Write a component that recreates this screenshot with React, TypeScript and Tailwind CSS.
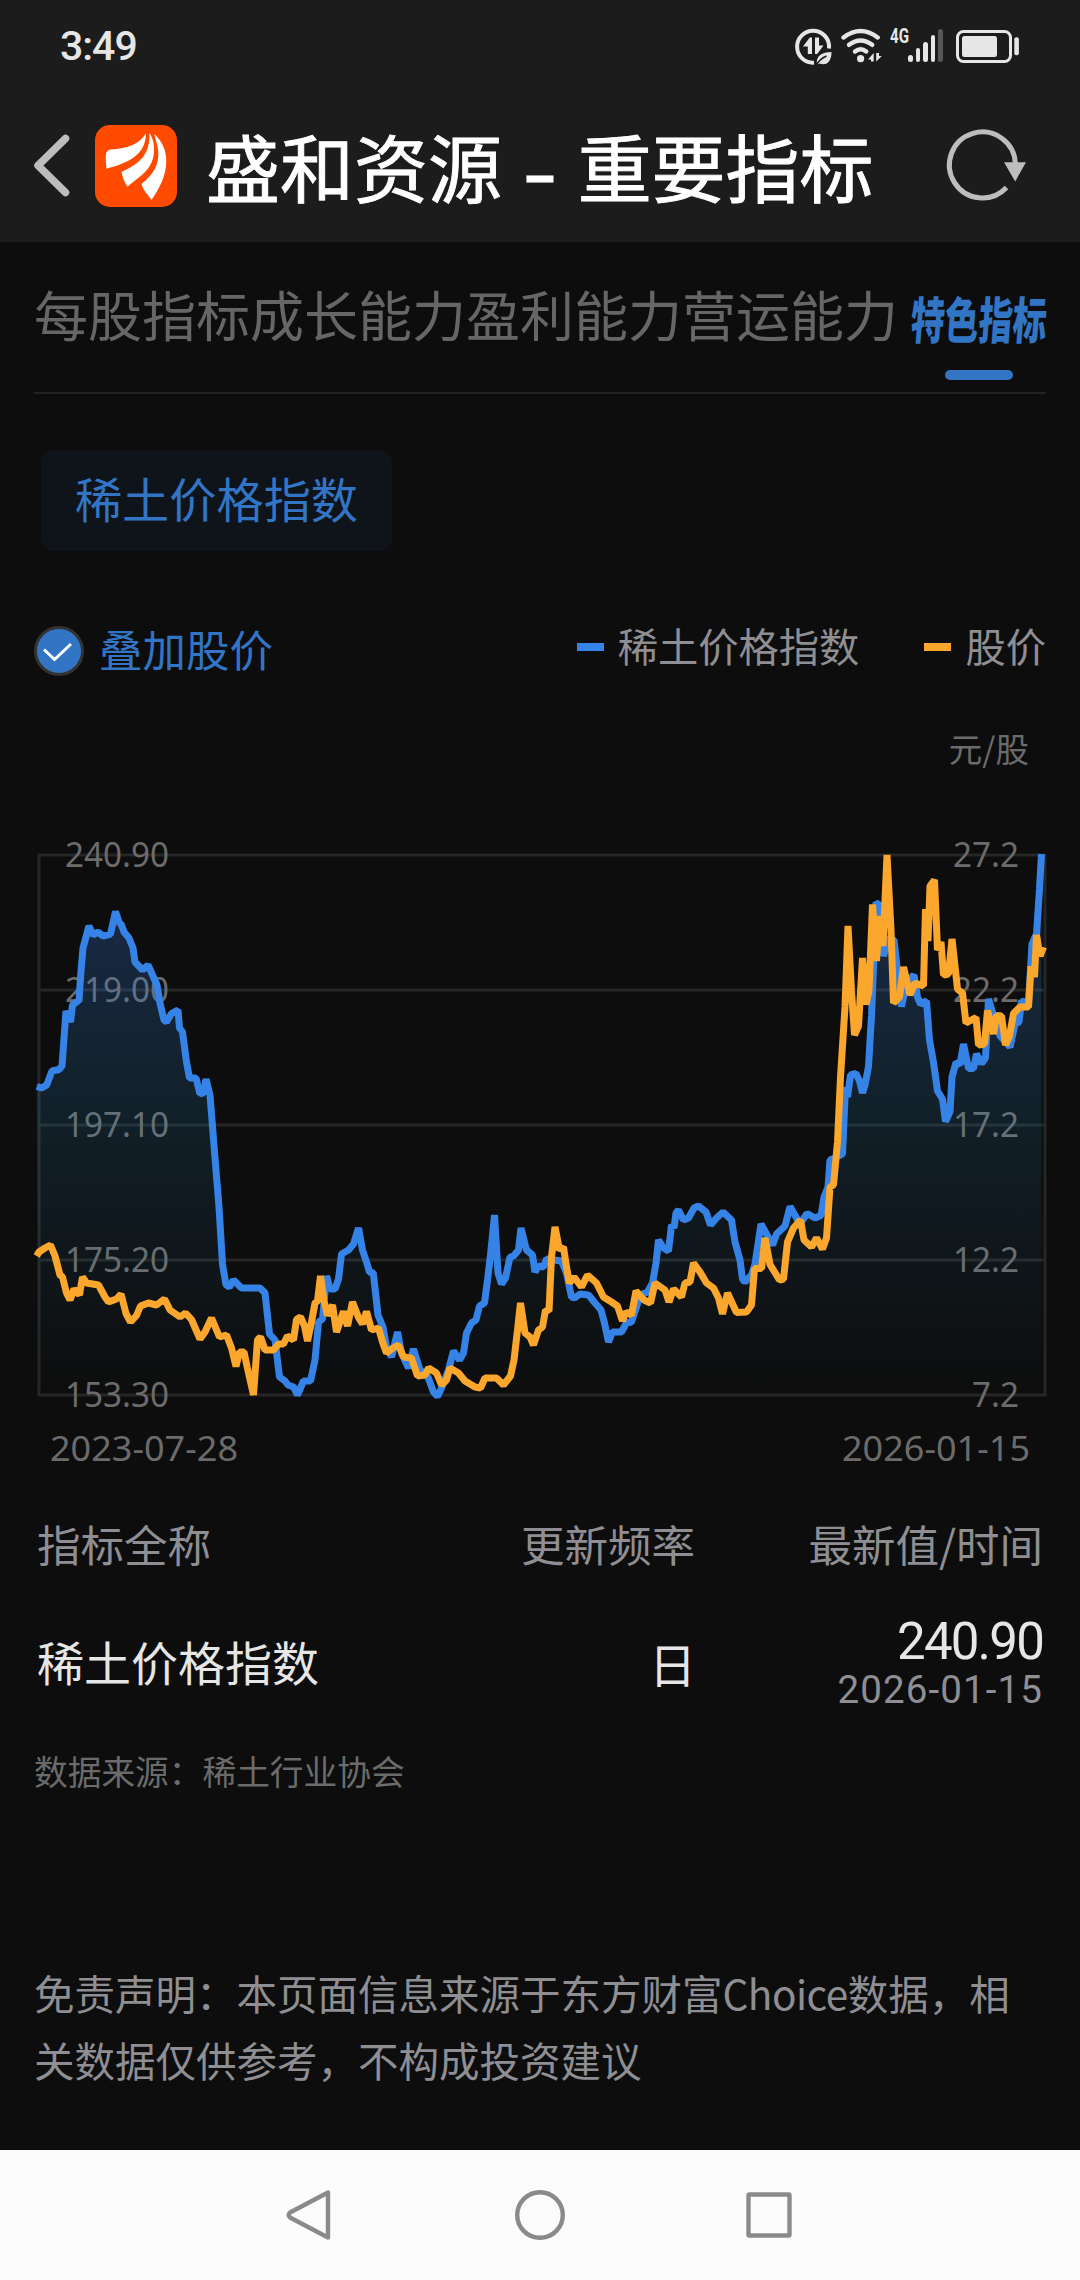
const TABS = ["每股指标", "成长能力", "盈利能力", "营运能力"];

const GRID = [
  { y: 15, left: "240.90", right: "27.2" },
  { y: 150, left: "219.00", right: "22.2" },
  { y: 285, left: "197.10", right: "17.2" },
  { y: 420, left: "175.20", right: "12.2" },
  { y: 555, left: "153.30", right: "7.2" },
];

const INDEX_LINE =
  "36.7,246.5 41.7,248 46.7,245 52,231 59,229.5 62,226 66,171 70.5,182 72.5,165 79,160 81,131 83,108 89,86 93,95 98,92 103,96 110.5,94 115.5,71.5 119,82 121.5,85 124,92 129,98 133,108 135,122 142.5,130 148,125 152.5,135 157,145 160,163 164,180 166.5,182 171.5,173.5 178,170 179.5,188 182.5,192 186.5,222 189.5,238 196,238 200,254 203.5,253 206,239 210,255 215,318 219,367 222.5,424 226,445 229.5,447 233.5,440 241.5,448 260,448 265,453 269.5,494 275,500 279.5,537 285,541 288,545 293.5,547 297.5,555 303.5,541 310.5,541 315,520 318.5,482 322.5,479 326.5,436 330,449 335,449 338.5,439 341.5,414 348.5,410 353.5,404 358.5,388 362.5,410 366.5,422 369.5,432 373.3,433 378,475 383,487 386.5,507 391.5,517 397.5,492 401.5,513 408.5,528 413.5,509 420,530 428,537 433.5,552 437.5,556.5 441.5,548 448.5,530 453.5,511 459.5,520 463.5,513 466.5,493 471.5,483 476,480 479.5,466 484.5,463 487.5,440 490.5,415 494.5,375 498,433 501.5,444 505.5,438 510,417 513.5,416 518.5,410 521,388 526.5,410 532.5,415 535,432 538.5,426 543.5,427 546.5,419 561.5,421 566.5,433 571.5,457 574.5,458 580,454 588.5,455 595,463 601,470 604.5,483 608.5,502 612.5,492 621.5,492 626.5,483 631.5,482 636.5,467 640,455 647.5,452 652.5,443 656,423 658.5,400 663.5,408 668.5,411 671.5,385 674,388 676,373 678.5,370 683.5,380 688.5,378 694,368 698.5,366 706,372 710.5,385 716.5,378 723,372 731.5,380 735,402 740,420 742.5,439 745,442 751.5,435 755,424 761,384 766.5,394 772.5,405 776.5,394 785,386 790,366.5 800,384 807,373.5 815,378 821,375.5 824,357 828,347 830,320 835,318 842.5,314 845.5,247 847.5,257 850.5,235 856,233.5 859.5,241 862.5,253 865,245 868.5,226.5 871.5,175.5 874.5,102 876,62.5 879.5,65 883.5,116 888.5,98 894,100 897.5,131 901.5,166.5 906.5,143 914,135 917.5,157 920.5,164 926.5,161 929.5,200 933.5,222.5 937.5,251 942.5,259 945.5,281.5 950,271.5 952,237 956,222.5 960,224.5 963.5,204 968.5,228.5 973.5,228.5 976.5,214 981.5,223.5 985.5,218 988.5,159 993.5,175.5 1000,196 1010,207 1015,184 1019,182 1021.5,161 1028.5,163 1032,104 1036.5,94 1039.5,49 1041.5,14";

const PRICE_LINE =
  "36.7,416 39,412 45,408 50.5,405 55,416 60,435 62.5,437 66.5,453 70,460 74,449 79.5,455 82.5,437 86.5,443 98.5,445 105,457 108.5,462 116.5,459 121,454 126,473.5 130.5,482 136.5,475.5 140.5,466 148.5,463 156.5,465 164.5,459 170,470 180,477 185.5,473 191.5,479.5 200,499 205,492 211.5,478 219.5,497 226.5,495 231.5,508 236,526.5 239.5,512 244,512 247.5,528.5 253.5,555 257.5,500 260.5,497 265,510 273.5,510 278.5,504 283.5,504 287.5,496 293.5,500 296.5,479.5 300.5,477 304.5,486 307.5,501 311.5,482 315,463 317.5,461 320.5,436 324,461 327.5,475.5 332.5,465 336.5,492 343.5,471.5 347.5,486 352.5,462 358.5,477.5 362.5,484 366.5,471.5 371.5,490 378.5,488 382.5,502 386.5,513 393,508 398.5,505 403.5,517 411.5,518 417.5,536 425,535 428.5,528 436.5,533 441.5,545 446.5,540 450,528 458.5,533 465,541 475,547 480.5,548 485,538 496.5,538 503.5,545 510.5,536 514,520 517.5,490 520.5,463 525,493 530,497 533.5,505 538.5,490 542.5,487 545.5,470 549,471 551.5,417 555,387 559.5,410 563.5,407 566.5,427 569.5,443 574,437 581.5,447 587.5,435 596.5,443 603.5,457 611.5,462 617.5,466 622.5,481 626,472 631.5,475 636,451 644,460 650.5,463 655,443 665,450 669,462 673.5,449 681.5,457 685,443 690,442 693.5,423 700,432 706.5,443 713.5,448 718.5,458 722.5,474 727.5,453 736.5,472.5 746.5,472 751.5,465 754.5,428.5 761.5,428.5 765,398 770,424.5 779.5,440 783.5,439 787.5,402 793.5,388 800.5,380 804,400 811.5,407 816.5,398 822.5,409 826.5,398 830,347 833.5,345 837.5,302 840.5,237 845,167 848,86 851.5,151 854.5,195 858.5,186 862.5,118 866,164.5 869,151 872.5,64.5 876.5,121 879.5,76 883,106 887,15 891,90 893.5,163 899.5,157 903.5,127 910,155 915,143 923.5,146 925.5,69 928,101 930,46 934.5,40 937.5,110 941,102 943.5,135 948.5,134 952,99 957.5,149 962.5,153 966,183 976,177.5 978.5,205 984.5,204 987.5,170.5 993.5,194 996.5,175.5 1001.5,176 1005.5,205 1009.5,196 1013.5,173.5 1020,167 1028.5,167 1031,126.5 1034.5,137 1036.5,95 1040,116 1043.5,107";

function StatusBar() {
  return (
    <div className="flex h-[90px] items-center justify-between pl-[60px] pr-[60px] pt-[3px] text-[#e6e6e6]">
      <span className="font-['Roboto'] text-[41px] font-medium leading-none tracking-[-1px]">3:49</span>
      <div className="flex h-10 items-start">
        <svg width="96" height="40" viewBox="794 26 96 40" fill="none" stroke="#e6e6e6">
          <path d="M829 47.5A16 16 0 1 0 814 61.7" strokeWidth="4" />
          <path d="M803 45.5L809.8 36.5H812V53H807.8V45.500ZM815 36.500H819V44.500H823.500L817.200 53H815Z" fill="#e6e6e6" stroke="none" />
          <path d="M817 63.5C815.5 55 822 51 831.500 51C831.500 60 827 65.500 819.500 62.500Z" fill="#e6e6e6" stroke="none" />
          <path d="M816 64.5C819 59 822 57 826.5 55" stroke="#1c1c1c" strokeWidth="1.6" />
          <path d="M843.5 36.5Q860.6 23.5 877.7 36.5" strokeWidth="4.4" strokeLinecap="round" />
          <path d="M849 43.8Q860.6 35 872.2 43.8" strokeWidth="4.4" strokeLinecap="round" />
          <path d="M855 50.5Q860.6 46 866.3 50.5" strokeWidth="4.4" strokeLinecap="round" />
          <circle cx="860.6" cy="57.7" r="3.6" fill="#e6e6e6" stroke="none" />
          <path d="M873.7 60.5V52L868 58.5H871V60.5ZM876.2 52V60.5L881.8 55H879V52Z" fill="#e6e6e6" stroke="none" />
        </svg>
        <span className="w-[18px] origin-left scale-x-[0.72] font-['Roboto'] text-[21px] font-bold leading-[19px]">4G</span>
        <div className="flex h-[35px] items-end gap-[3px] pt-0.5">
          <i className="h-[7px] w-[4.6px] rounded-full bg-[#e6e6e6]" />
          <i className="h-[14px] w-[4.6px] rounded-full bg-[#e6e6e6]" />
          <i className="h-[20px] w-[4.6px] rounded-full bg-[#e6e6e6]" />
          <i className="h-[27px] w-[4.6px] rounded-full bg-[#e6e6e6]" />
          <i className="h-[33px] w-[4.6px] rounded-full bg-[#575757]" />
        </div>
        <svg className="ml-[13px]" width="64" height="40" viewBox="956 26 64 40">
          <rect x="957.5" y="30.5" width="53" height="30" rx="6" fill="none" stroke="#e6e6e6" strokeWidth="3" />
          <rect x="962" y="35" width="35" height="21" rx="2.5" fill="#e6e6e6" />
          <rect x="1014.3" y="36.3" width="4.6" height="18" rx="2" fill="#e6e6e6" />
        </svg>
      </div>
    </div>
  );
}

function Header() {
  return (
    <div className="flex h-[152px] items-center">
      <svg width="180" height="100" viewBox="0 116 180 100" fill="none">
        <path d="M65.5 138.5L38 165.5L65.5 192.5" stroke="#bdbdbd" strokeWidth="7.5" strokeLinecap="round" strokeLinejoin="round" />
        <rect x="95" y="125" width="82" height="82" rx="15" fill="#ff4a00" />
        <g fill="#fff">
          <path d="M146 133C140 144 128 148.5 111 149.5C104.5 150 105.5 156 106.5 168.7C128 163 146 155 146 133Z" />
          <path d="M149.5 132.7C150 155 140 163 121.5 172C122.5 178 125 183 127.4 186.7C140 176 157.5 168 153.5 143C152.5 138 151 135 149.5 132.7Z" />
          <path d="M154.3 134C162 141 166.3 150 166.3 161C166.3 176 159 189 151.5 200C148 195 143 190 141.5 184C154 174 161 163 157.4 146Z" />
        </g>
      </svg>
      <h1 className="ml-[26px] mt-2 whitespace-nowrap font-['Inter','Noto_Sans_CJK_SC',sans-serif] text-[74px] font-normal leading-none text-white [-webkit-text-stroke:0.9px_white]">
        盛和资源 <span className="inline-block w-[34px] translate-y-[5px] scale-x-110 text-center">-</span> 重要指标
      </h1>
      <svg className="ml-auto mr-[50px]" width="88" height="90" viewBox="942 121 88 90" fill="none">
        <path d="M1015.4 164A33 33 0 1 0 1006.5 187.5" stroke="#bdbdbd" strokeWidth="5" />
        <path d="M1004 162.3H1026L1015.2 181.5Z" fill="#bdbdbd" />
      </svg>
    </div>
  );
}

function Tabs() {
  return (
    <nav className="mx-[34px] flex h-[152px] border-b-2 border-[#222] pt-[45px]">
      {TABS.map((tab) => (
        <span key={tab} className="shrink-0 whitespace-nowrap text-[54px] leading-[54px] text-[#666]">
          {tab}
        </span>
      ))}
      <div className="ml-[13px] flex w-[136px] shrink-0 flex-col items-center">
        <span className="mt-[5px] h-[50px] origin-center scale-x-[0.68] -skew-x-6 whitespace-nowrap text-[50px] font-black leading-[50px] text-[#3275c5]">
          特色指标
        </span>
        <span className="mt-[28px] h-[10px] w-[68px] rounded-[5px] bg-[#3275c5]" />
      </div>
    </nav>
  );
}

function Chart() {
  return (
    <svg width="1080" height="640" viewBox="0 0 1080 640" className="block overflow-visible font-['Noto_Sans']">
      <defs>
        <linearGradient id="area" gradientUnits="userSpaceOnUse" x1="0" y1="15" x2="0" y2="555">
          <stop offset="0" stopColor="#3a7cf0" stopOpacity="0.28" />
          <stop offset="0.25" stopColor="#3583e0" stopOpacity="0.21" />
          <stop offset="0.5" stopColor="#2c96d8" stopOpacity="0.13" />
          <stop offset="1" stopColor="#2c9ad8" stopOpacity="0" />
        </linearGradient>
      </defs>
      <g stroke="#262626" strokeWidth="3">
        {GRID.map((row) => (
          <line key={row.y} x1="38" x2="1046" y1={row.y} y2={row.y} />
        ))}
        <line x1="39" x2="39" y1="14" y2="556" />
        <line x1="1045" x2="1045" y1="14" y2="556" />
      </g>
      <g fill="#6b6b6b" fontSize="34">
        {GRID.map((row) => (
          <g key={row.y}>
            <text x="65" y={row.y + 11.5} textLength="104" lengthAdjust="spacingAndGlyphs">
              {row.left}
            </text>
            <text x="1019" y={row.y + 11.5} textAnchor="end" textLength={row.right.length === 4 ? 66 : 47} lengthAdjust="spacingAndGlyphs">
              {row.right}
            </text>
          </g>
        ))}
        <text x="50" y="620.5" textLength="188" lengthAdjust="spacingAndGlyphs">2023-07-28</text>
        <text x="842" y="620.5" textLength="188" lengthAdjust="spacingAndGlyphs">2026-01-15</text>
      </g>
      <polygon points={`39,555 ${INDEX_LINE} 1041.5,555`} fill="url(#area)" />
      <polyline points={INDEX_LINE} fill="none" stroke="#3583e6" strokeWidth="7" strokeLinejoin="bevel" />
      <polyline points={PRICE_LINE} fill="none" stroke="#fba62c" strokeWidth="7" strokeLinejoin="bevel" />
    </svg>
  );
}

function Legend() {
  return (
    <div className="flex h-[60px] items-center pl-[34px] pr-[34px]">
      <svg width="50" height="50" viewBox="0 0 50 50">
        <circle cx="25" cy="25" r="23.5" fill="#3275c5" stroke="#333" strokeWidth="3" />
        <path d="M10 23.5L20.5 33.5L37 18" fill="none" stroke="#fff" strokeWidth="3" />
      </svg>
      <span className="-mt-1 ml-[15px] text-[43.5px] leading-none text-[#3275c5]">叠加股价</span>
      <div className="-mt-2 ml-auto flex items-center text-[40.3px] leading-none text-[#8e8e93]">
        <i className="h-2 w-[27px] bg-[#3583e6]" />
        <span className="-mt-1 ml-[14px]">稀土价格指数</span>
        <i className="ml-[65px] h-2 w-[27px] bg-[#fba62c]" />
        <span className="-mt-1 ml-[14px]">股价</span>
      </div>
    </div>
  );
}

function IndicatorTable() {
  return (
    <div className="h-[224px] px-[37px] pt-[18px]">
      <div className="flex text-[43.5px] leading-[52px] text-[#8e8e93]">
        <span className="w-[300px]">指标全称</span>
        <span className="w-[358px] text-right">更新频率</span>
        <span className="flex-1 text-right">最新值/时间</span>
      </div>
      <div className="mt-[43px] flex h-[100px] items-center text-[47px] text-[#e6e6e6]">
        <span className="-mt-[5px] w-[300px] leading-none">稀土价格指数</span>
        <span className="-mt-px w-[359px] text-right leading-none">日</span>
        <div className="mt-1 flex flex-1 flex-col items-end font-['Roboto']">
          <span className="text-[51px] leading-[50px] tracking-[-1.8px]">240.90</span>
          <span className="text-[38.5px] leading-[46px] tracking-[1.1px] text-[#8e8e93]">2026-01-15</span>
        </div>
      </div>
    </div>
  );
}

function NavBar() {
  return (
    <div className="h-[130px] bg-[#fcfcfc]">
      <svg width="1080" height="130" viewBox="0 0 1080 130" fill="none" stroke="#8a8a8a" strokeWidth="4.4" strokeLinejoin="round">
        <path d="M328 42.5V87.5L290 67.5Q287.5 65 290 62.5Z" />
        <circle cx="540" cy="65" r="22.8" />
        <rect x="748.5" y="44.5" width="41" height="41" rx="1" />
      </svg>
    </div>
  );
}

export default function App() {
  return (
    <main className="flex h-[2280px] w-[1080px] flex-col overflow-hidden bg-[#0d0d0d] font-['Noto_Sans_CJK_SC',sans-serif]">
      <header className="bg-[#1c1c1c]">
        <StatusBar />
        <Header />
      </header>
      <Tabs />
      <div className="ml-[41px] mt-[56px] flex h-[101px] w-[351px] items-center justify-center rounded-[13px] bg-[#0f141b] pb-[5px] text-[47.2px] leading-none text-[#3275c5]">
        稀土价格指数
      </div>
      <div className="mt-[70px]">
        <Legend />
      </div>
      <p className="mt-[51px] pr-[51px] text-right text-[33.5px] leading-8 text-[#6b6b6b]">元/股</p>
      <div className="mt-[76px]">
        <Chart />
      </div>
      <div className="mt-[20px]">
        <IndicatorTable />
      </div>
      <p className="mt-[30px] pl-[34px] text-[33.7px] leading-[34px] text-[#6b6b6b]">数据来源：稀土行业协会</p>
      <p className="mt-[171px] w-[1046px] pl-[34px] text-[40.5px] leading-[67px] text-[#8e8e93]">
        免责声明：本页面信息来源于东方财富<span className="tracking-[-0.5px]">Choice</span>数据，相
        <br />
        关数据仅供参考，不构成投资建议
      </p>
      <div className="mt-auto">
        <NavBar />
      </div>
    </main>
  );
}
